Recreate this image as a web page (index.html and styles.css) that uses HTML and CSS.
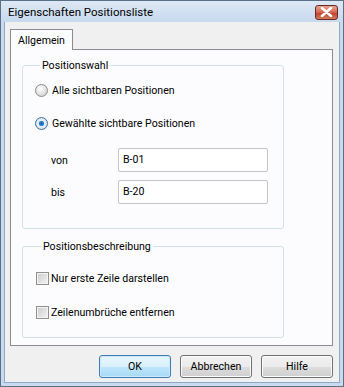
FILE: index.html
```html
<!DOCTYPE html>
<html>

<head>
    <meta charset="UTF-8">
    <meta name="viewport" content="width=device-width, initial-scale=1.0">
    <title>Eigenschaften Positionsliste</title>
    <link rel="stylesheet" href="styles.css">
</head>

<body>
    <div class="window">
        <div class="titlebar">
            <span class="title">Eigenschaften Positionsliste</span>
            <div class="close-btn">
                <svg width="13" height="10" viewBox="0 0 13 10">
                    <path d="M2 1 L11 9 M11 1 L2 9" stroke="#fff" stroke-width="2.6" stroke-linecap="round" />
                </svg>
            </div>
        </div>

        <div class="client">
            <div class="tabs">
                <div class="tab active">Allgemein</div>
            </div>

            <div class="tab-panel">
                <fieldset class="group group-wahl">
                    <legend>Positionswahl</legend>

                    <label class="option">
                        <span class="radio"></span>
                        Alle sichtbaren Positionen
                    </label>
                    <label class="option option-second">
                        <span class="radio checked"></span>
                        Gewählte sichtbare Positionen
                    </label>

                    <div class="field">
                        <span class="field-label">von</span>
                        <div class="textbox">B-01</div>
                    </div>
                    <div class="field">
                        <span class="field-label">bis</span>
                        <div class="textbox">B-20</div>
                    </div>
                </fieldset>

                <fieldset class="group group-beschreibung">
                    <legend>Positionsbeschreibung</legend>

                    <label class="option check-option">
                        <span class="checkbox"></span>
                        Nur erste Zeile darstellen
                    </label>
                    <label class="option check-option option-third">
                        <span class="checkbox"></span>
                        Zeilenumbrüche entfernen
                    </label>
                </fieldset>
            </div>

            <div class="buttons">
                <button type="button" class="btn btn-default">OK</button>
                <button type="button" class="btn">Abbrechen</button>
                <button type="button" class="btn">Hilfe</button>
            </div>
        </div>
    </div>
</body>

</html>
```

FILE: styles.css
```css
body {
    margin: 0;
    padding: 0;
    font-family: Roboto, "Liberation Sans", sans-serif;
    font-size: 10.6px;
    color: #000;
    background-color: #f0f0f0;
}

.window {
    width: 344px;
    height: 387px;
    box-sizing: border-box;
    display: flex;
    flex-direction: column;
    border: 1px solid #5b6f86;
    background-color: #c9daee;
}

.titlebar {
    height: 21px;
    display: flex;
    align-items: center;
    justify-content: space-between;
    padding: 0 5px 0 7px;
    background: linear-gradient(#dde8f5, #c7d9ee);
}

.title {
    font-size: 11.5px;
    color: #000;
}

.close-btn {
    width: 23px;
    height: 15px;
    box-sizing: border-box;
    margin-top: 1px;
    display: flex;
    align-items: center;
    justify-content: center;
    border: 1px solid #6b2a22;
    border-radius: 3px;
    background: linear-gradient(#e8a493, #d2644f 50%, #c2422c 55%, #d47a5f);
}

.client {
    flex: 1;
    margin: 0 3px 3px 3px;
    padding: 6px 6px 0 5px;
    background-color: #f0f0f0;
    border: 1px solid #8ea9c6;
    border-top: none;
    display: flex;
    flex-direction: column;
}

.tabs {
    display: flex;
    height: 21px;
}

.tab {
    padding: 4px 7px 0 7px;
    border: 1px solid #898c95;
    border-bottom: none;
    background-color: #fcfcfe;
    position: relative;
    top: 1px;
}

.tab-panel {
    height: 297px;
    box-sizing: border-box;
    border: 1px solid #898c95;
    background-color: #fcfcfe;
    padding: 9px 48px 0 11px;
}

.group {
    margin: 0;
    padding: 0;
    border: 1px solid #d5dfe5;
    border-radius: 3px;
}

.group legend {
    padding: 0 2px;
    margin-left: 5px;
}

.group-wahl {
    height: 170px;
    box-sizing: border-box;
    padding: 10px 0 0 12px;
}

.group-beschreibung {
    margin-top: 11px;
    height: 98px;
    box-sizing: border-box;
    padding: 17px 0 0 13px;
}

.option {
    display: flex;
    align-items: center;
    gap: 4px;
    height: 16px;
}

.option-second {
    margin-top: 17px;
}

.option-third {
    margin-top: 18px;
}

.check-option {
    gap: 2px;
}

.radio {
    width: 11px;
    height: 11px;
    border: 1px solid #8b8b8b;
    border-radius: 50%;
    background: radial-gradient(circle at 40% 35%, #ffffff, #d9d9d9 70%, #c8c8c8);
}

.radio.checked {
    border-color: #3c6e9e;
    background: radial-gradient(circle at 50% 50%, #1d5a9c 0, #3b8fd4 30%, #e8f2fa 40%, #d4dee8 80%);
}

.checkbox {
    width: 11px;
    height: 11px;
    border: 1px solid #8f8f8f;
    background: linear-gradient(135deg, #cbcbcb, #f4f4f4);
    box-shadow: inset 0 0 0 1px #f4f4f4;
}

.field {
    display: flex;
    align-items: center;
    margin-top: 8px;
    padding-left: 16px;
}

.option-second + .field {
    margin-top: 17px;
}

.field-label {
    width: 67px;
}

.textbox {
    width: 150px;
    height: 24px;
    box-sizing: border-box;
    padding: 4px 0 0 4px;
    border: 1px solid #c0c6cc;
    border-radius: 2px;
    background-color: #fff;
}

.buttons {
    display: flex;
    justify-content: flex-end;
    gap: 9px;
    margin-top: 9px;
}

.btn {
    width: 72px;
    height: 23px;
    padding: 0;
    font-family: Roboto, "Liberation Sans", sans-serif;
    font-size: 10.6px;
    color: #000;
    border: 1px solid #707070;
    border-radius: 3px;
    background: linear-gradient(#f2f2f2 0, #ebebeb 50%, #dddddd 51%, #cfcfcf 100%);
    box-shadow: inset 0 0 0 1px #fcfcfc;
}

.btn-default {
    border-color: #3c7fb1;
    background: linear-gradient(#eaf6fd 0, #d9f0fc 50%, #bee6fd 51%, #a7d9f5 100%);
    box-shadow: inset 0 0 0 1px #cbe9fa;
}
```
